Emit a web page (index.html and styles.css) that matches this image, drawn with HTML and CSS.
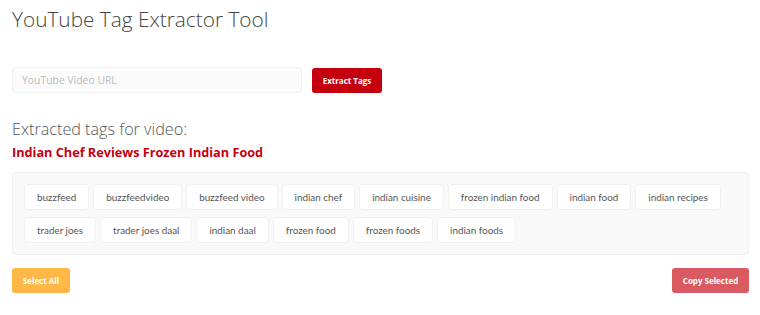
FILE: index.html
```html
<!DOCTYPE html>
<html>
<head>
<meta charset="utf-8">
<link rel="stylesheet" href="styles.css">
</head>
<body>
<div class="page">
  <h1 class="title">YouTube Tag Extractor Tool</h1>
  <div class="form">
    <input class="url" type="text" placeholder="YouTube Video URL">
    <button class="btn btn-extract">Extract Tags</button>
  </div>
  <h2 class="subtitle">Extracted tags for video:</h2>
  <div class="video-title">Indian Chef Reviews Frozen Indian Food</div>
  <div class="tags">
    <span class="tag">buzzfeed</span>
    <span class="tag">buzzfeedvideo</span>
    <span class="tag">buzzfeed video</span>
    <span class="tag">indian chef</span>
    <span class="tag">indian cuisine</span>
    <span class="tag">frozen indian food</span>
    <span class="tag">indian food</span>
    <span class="tag">indian recipes</span>
    <span class="tag">trader joes</span>
    <span class="tag">trader joes daal</span>
    <span class="tag">indian daal</span>
    <span class="tag">frozen food</span>
    <span class="tag">frozen foods</span>
    <span class="tag">indian foods</span>
  </div>
  <div class="actions">
    <button class="btn btn-select">Select All</button>
    <button class="btn btn-copy">Copy Selected</button>
  </div>
</div>
</body>
</html>
```

FILE: styles.css
```css
* { box-sizing: border-box; }
html, body { margin: 0; padding: 0; background: #fff; }
body { font-family: "Open Sans", "Liberation Sans", sans-serif; color: #444; }
.page { padding: 6px 11px 0 12px; }
.title {
  margin: 0;
  font-size: 20.8px;
  font-weight: 300;
  line-height: 26px;
  color: #444;
}
.form {
  display: flex;
  align-items: flex-start;
  gap: 10px;
  margin-top: 35px;
  height: 26px;
}
.url {
  width: 290px;
  height: 26px;
  border: 1px solid #f0f0f0;
  border-radius: 3px;
  background: #fbfbfb;
  padding: 0 9px;
  font-family: "Open Sans", sans-serif;
  font-size: 10.4px;
  color: #999;
  outline: none;
}
.url::placeholder { color: #bbbbbb; }
.btn {
  border: none;
  border-radius: 3px;
  color: #fff;
  font-family: "Open Sans", sans-serif;
  font-weight: 700;
  font-size: 8px;
  height: 25px;
  padding: 0;
  cursor: pointer;
}
.btn-extract { background: #c4000e; width: 70px; margin-top: 1px; }
.subtitle {
  margin: 25px 0 0;
  font-size: 16.2px;
  font-weight: 300;
  line-height: 22px;
  color: #555;
}
.video-title {
  margin-top: 3px;
  font-size: 12.7px;
  font-weight: 700;
  line-height: 18px;
  color: #c4000e;
}
.tags {
  margin-top: 11px;
  background: #f9f9f9;
  border: 1px solid #f0f0f0;
  border-radius: 4px;
  padding: 11px;
  display: flex;
  flex-wrap: wrap;
  align-content: flex-start;
  gap: 7px 4px;
  height: 83px;
}
.tag {
  display: flex;
  align-items: center;
  height: 26px;
  padding: 0 12px;
  background: #fff;
  border: 1px solid #f0f0f0;
  border-radius: 4px;
  font-family: Lato, "Open Sans", sans-serif;
  font-size: 9.9px;
  color: #555;
}
.actions {
  display: flex;
  justify-content: space-between;
  margin-top: 13px;
}
.btn-select { background: #ffb747; width: 58px; }
.btn-copy { background: #da5a62; width: 77px; }
```
